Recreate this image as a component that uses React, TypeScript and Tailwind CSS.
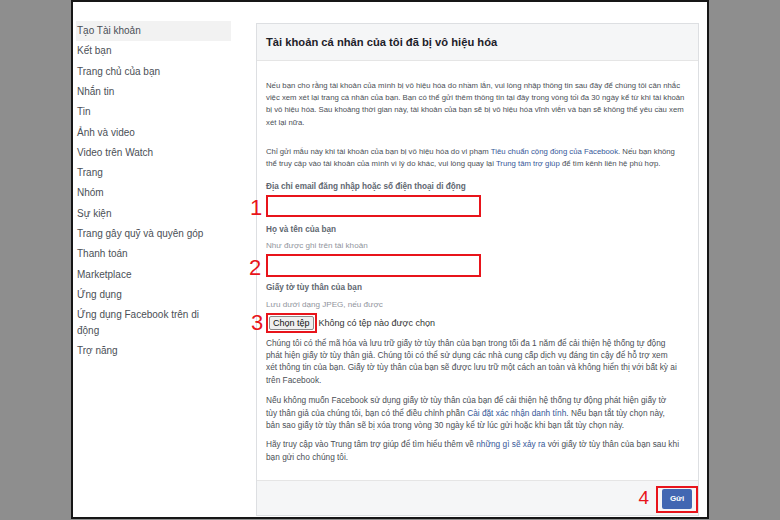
import React from "react";

const sidebar: React.ReactNode[] = [
  "Tạo Tài khoản",
  "Kết bạn",
  "Trang chủ của bạn",
  "Nhắn tin",
  "Tin",
  "Ảnh và video",
  "Video trên Watch",
  "Trang",
  "Nhóm",
  "Sự kiện",
  "Trang gây quỹ và quyên góp",
  "Thanh toán",
  "Marketplace",
  "Ứng dụng",
  <>
    Ứng dụng Facebook trên di
    <br />
    động
  </>,
  "Trợ năng",
];

function Link({ children }: { children: React.ReactNode }) {
  return <span className="text-[#365899]">{children}</span>;
}

function Num({ n, cls }: { n: string; cls: string }) {
  return (
    <span
      className={
        "absolute text-[#e8141b] text-[22px] leading-none font-['Liberation_Sans',Arial,sans-serif] " +
        cls
      }
    >
      {n}
    </span>
  );
}

export default function App() {
  return (
    <div className="w-[780px] h-[520px] bg-[#8e8e8e] font-['Liberation_Sans',Arial,sans-serif] overflow-hidden">
      <div className="ml-[71px] w-[638px] h-[519px] border-2 border-[#161616] bg-white flex">
        {/* Sidebar */}
        <div className="ml-[3px] mt-[19px] w-[155px] flex flex-col text-[10px] text-[#4b4f56]">
          {sidebar.map((s, i) => (
            <div
              key={i}
              className={
                "pl-[1px] py-[2.15px] leading-[16px] " + (i === 0 ? "bg-[#f2f2f2]" : "")
              }
            >
              {s}
            </div>
          ))}
        </div>

        {/* Panel */}
        <div className="ml-[25px] mt-[21px] mb-[1px] w-[443px] border border-[#dddfe2] flex flex-col">
          <div className="h-[37px] bg-[#f5f6f7] border-b border-[#e5e5e5] flex items-center pl-[9px]">
            <span className="text-[11.2px] font-bold text-[#1d2129]">
              Tài khoản cá nhân của tôi đã bị vô hiệu hóa
            </span>
          </div>

          <div className="flex-1 pl-[9px] pt-[18.85px] text-[8.3px] leading-[12.3px] text-[#4b4f56] whitespace-nowrap">
            <p className="text-[7.75px]">
              <span className="block">
                Nếu bạn cho rằng tài khoản của mình bị vô hiệu hóa do nhầm lẫn, vui lòng nhập thông tin sau đây để chúng tôi cân nhắc
              </span>
              <span className="block">
                việc xem xét lại trang cá nhân của bạn. Bạn có thể gửi thêm thông tin tại đây trong vòng tối đa 30 ngày kể từ khi tài khoản
              </span>
              <span className="block">
                bị vô hiệu hóa. Sau khoảng thời gian này, tài khoản của bạn sẽ bị vô hiệu hóa vĩnh viễn và bạn sẽ không thể yêu cầu xem
              </span>
              <span className="block">xét lại nữa.</span>
            </p>

            <p className="mt-[16.8px] text-[7.75px]">
              <span className="block">
                Chỉ gửi mẫu này khi tài khoản của bạn bị vô hiệu hóa do vi phạm{" "}
                <Link>Tiêu chuẩn cộng đồng của Facebook</Link>. Nếu bạn không
              </span>
              <span className="block">
                thể truy cập vào tài khoản của mình vì lý do khác, vui lòng quay lại{" "}
                <Link>Trung tâm trợ giúp</Link> để tìm kênh liên hệ phù hợp.
              </span>
            </p>

            <div className="mt-[10.4px] font-bold text-[8.2px] text-[#606770]">
              Địa chỉ email đăng nhập hoặc số điện thoại di động
            </div>
            <div className="relative mt-[2px]">
              <Num n="1" cls="left-[-16px] top-[2px]" />
              <div className="w-[215px] h-[22px] border-2 border-[#e8141b] bg-white" />
            </div>

            <div className="mt-[6.85px] font-bold text-[8.2px] text-[#606770]">Họ và tên của bạn</div>
            <div className="mt-[3.7px] text-[8.1px] text-[#90949c]">Như được ghi trên tài khoản</div>
            <div className="relative mt-[1.85px]">
              <Num n="2" cls="left-[-17px] top-[3px]" />
              <div className="w-[215px] h-[23px] border-2 border-[#e8141b] bg-white" />
            </div>

            <div className="mt-[4.85px] font-bold text-[8.2px] text-[#606770]">Giấy tờ tùy thân của bạn</div>
            <div className="mt-[4.7px] text-[8.1px] text-[#90949c]">Lưu dưới dạng JPEG, nếu được</div>
            <div className="relative mt-[1.85px] flex items-center">
              <Num n="3" cls="left-[-15px] top-[-1px]" />
              <div className="border-2 border-[#e8141b] p-[1px]">
                <div className="h-[14px] px-[3px] flex items-center bg-[#efefef] border border-[#8a8a8a] rounded-[2px] text-[9px] text-[#111]">
                  Chọn tệp
                </div>
              </div>
              <span className="ml-[2px] text-[9px] text-[#333]">Không có tệp nào được chọn</span>
            </div>

            <p className="mt-[3.85px]">
              <span className="block">
                Chúng tôi có thể mã hóa và lưu trữ giấy tờ tùy thân của bạn trong tối đa 1 năm để cải thiện hệ thống tự động
              </span>
              <span className="block">
                phát hiện giấy tờ tùy thân giả. Chúng tôi có thể sử dụng các nhà cung cấp dịch vụ đáng tin cậy để hỗ trợ xem
              </span>
              <span className="block">
                xét thông tin của bạn. Giấy tờ tùy thân của bạn sẽ được lưu trữ một cách an toàn và không hiển thị với bất kỳ ai
              </span>
              <span className="block">trên Facebook.</span>
            </p>

            <p className="mt-[8.3px]">
              <span className="block">
                Nếu không muốn Facebook sử dụng giấy tờ tùy thân của bạn để cải thiện hệ thống tự động phát hiện giấy tờ
              </span>
              <span className="block">
                tùy thân giả của chúng tôi, bạn có thể điều chỉnh phần{" "}
                <Link>Cài đặt xác nhận danh tính</Link>. Nếu bạn tắt tùy chọn này,
              </span>
              <span className="block">
                bản sao giấy tờ tùy thân sẽ bị xóa trong vòng 30 ngày kể từ lúc gửi hoặc khi bạn tắt tùy chọn này.
              </span>
            </p>

            <p className="mt-[7.1px]">
              <span className="block">
                Hãy truy cập vào Trung tâm trợ giúp để tìm hiểu thêm về{" "}
                <Link>những gì sẽ xảy ra</Link> với giấy tờ tùy thân của bạn sau khi
              </span>
              <span className="block">bạn gửi cho chúng tôi.</span>
            </p>
          </div>

          <div className="h-[35px] bg-[#f5f6f7] border-t border-[#e5e5e5] flex items-start justify-end pt-[5px] pr-[0px]">
            <span className="mt-[1px] mr-[7px] text-[#e8141b] text-[19px] leading-[22px]">4</span>
            <div className="border-2 border-[#e8141b] pl-[4px] pr-[4px] pt-[1px] pb-[2px]">
              <div className="w-[30px] h-[20px] bg-[#4267b2] rounded-[2px] flex items-center justify-center text-white text-[8px] font-bold">
                Gửi
              </div>
            </div>
          </div>
        </div>
      </div>
    </div>
  );
}
